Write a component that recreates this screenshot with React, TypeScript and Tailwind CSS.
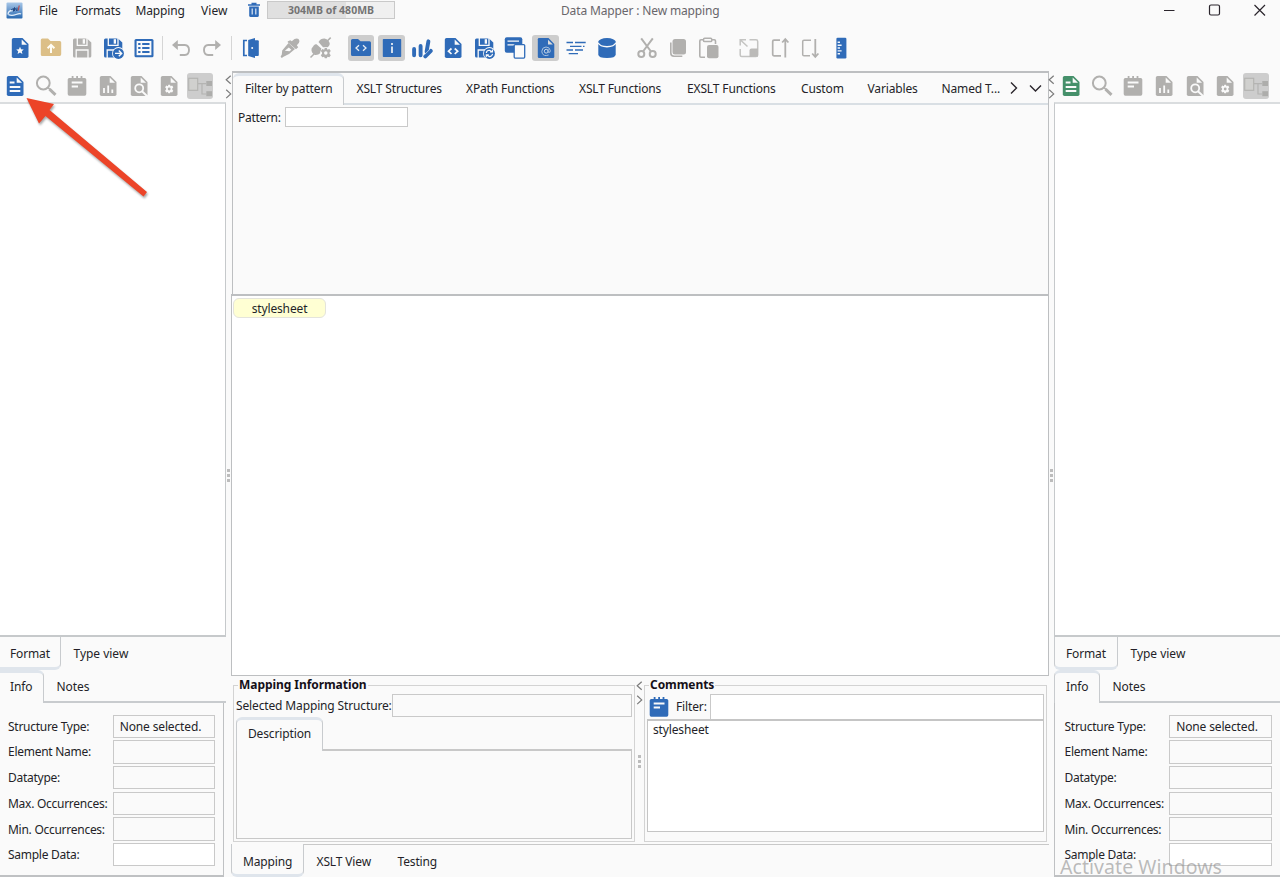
import React from 'react';

const BLUE = '#2f6bb8';
const GRAY = '#b1b0ae';
const GREEN = '#45906a';
const BG = '#fafafa';

type IconProps = { c?: string };

function Svg({ children }: { children: React.ReactNode }) {
  return (
    <svg width="24" height="24" viewBox="0 0 24 24" fill="none" className="block shrink-0">
      {children}
    </svg>
  );
}

function FileBase({ c, children }: { c: string; children?: React.ReactNode }) {
  return (
    <Svg>
      <path d="M14.5 2H5.5Q3.8 2 3.8 3.7V20.3Q3.8 22 5.5 22H18.8Q20.5 22 20.5 20.3V8Z" fill={c} />
      <path d="M13.7 3.6V8.8H19Z" fill={BG} />
      {children}
    </Svg>
  );
}

const NewFile = () => (
  <FileBase c={BLUE}>
    <path d="M12 10.7l1.1 2.5 2.7.3-2 1.8.6 2.7-2.4-1.4L9.6 18l.6-2.7-2-1.8 2.7-.3z" fill={BG} />
  </FileBase>
);
const FolderUp = () => (
  <Svg>
    <path d="M1.8 4Q1.8 2.5 3.3 2.5H9L11.5 5H20.7Q22.2 5 22.2 6.5V18.3Q22.2 20 20.6 20H3.3Q1.8 20 1.8 18.4Z" fill="#dcbf87" />
    <path d="M12 17V10M8.6 12.2L12 8.8L15.4 12.2" stroke="#fffdf5" strokeWidth="2" />
  </Svg>
);
function SaveBody({ c }: { c: string }) {
  return (
    <>
      <path d="M4.5 2.5H17L21.3 6.5V20Q21.3 21.5 19.8 21.5H4.5Q3 21.5 3 20V4Q3 2.5 4.5 2.5Z" fill={c} />
      <path d="M7.3 2V9.3H17V2M6.2 22V14H18V22" stroke={BG} strokeWidth="1.3" />
      <path d="M12.7 3.2H15V7.7H12.7Z" fill={BG} />
    </>
  );
}
const Save = () => <Svg><SaveBody c={GRAY} /></Svg>;
const SaveAs = () => (
  <Svg>
    <SaveBody c={BLUE} />
    <circle cx="17.4" cy="17.4" r="6.3" fill={BG} />
    <circle cx="17.4" cy="17.4" r="5.5" fill={BLUE} />
    <path d="M14 17.4H20.5M17.8 14.5L20.7 17.4L17.8 20.3" stroke={BG} strokeWidth="1.4" />
  </Svg>
);
const SaveSync = () => (
  <Svg>
    <SaveBody c={BLUE} />
    <circle cx="17.4" cy="17.4" r="6.3" fill={BG} />
    <circle cx="17.4" cy="17.4" r="5.5" fill={BLUE} />
    <path d="M14.3 17Q14.6 14.2 17.5 14.2L19.8 15.5M20.5 13.5V16H18M20.6 17.8Q20 20.5 17.4 20.6L15 19.3M14.3 21.2V18.8H16.8" stroke={BG} strokeWidth="1.1" />
  </Svg>
);
const ListIcon = () => (
  <Svg>
    <rect x="2.5" y="3" width="19" height="18.3" rx="1.5" fill={BLUE} />
    <rect x="4.6" y="5" width="14.8" height="14.2" fill={BG} />
    <path d="M6.2 8H8.5M10.2 8H17.5M6.2 12H8.5M10.2 12H17.5M6.2 16H8.5M10.2 16H17.5" stroke={BLUE} strokeWidth="2" />
  </Svg>
);
const Undo = () => (
  <Svg>
    <path d="M5 9H15.8Q20 9.3 20 14T15.8 19H10.8" stroke={GRAY} strokeWidth="1.9" />
    <path d="M8.8 4V14L3 9Z" fill={GRAY} />
  </Svg>
);
const Redo = () => (
  <Svg>
    <path d="M19 9H8.2Q4 9.3 4 14T8.2 19H13.2" stroke={GRAY} strokeWidth="1.9" />
    <path d="M15.2 4V14L21 9Z" fill={GRAY} />
  </Svg>
);
const Door = () => (
  <Svg>
    <path d="M8 4.5H4.8V19.5H8" stroke={BLUE} strokeWidth="1.7" />
    <path d="M9.2 4L16 2V22L9.2 20Z" fill={BLUE} />
    <path d="M16 4.2H18.8Q19.8 4.2 19.8 5.2V19Q19.8 20 18.8 20H16Z" fill={BLUE} />
    <circle cx="13.2" cy="12" r="1" fill={BG} />
  </Svg>
);
const Dropper = () => (
  <Svg>
    <path d="M10 5.2L12.3 4.3L13.8 5.3L16.5 3Q20.7 1.4 21.5 5Q21.5 7.2 18.8 9.3L20.2 11.3L18 13.3L9.5 6Z" fill={GRAY} />
    <path d="M10.5 7L17 13L11 18L5.5 20.7L3.8 22L2.6 20.8L3.8 18.5L4.2 14.5Z" fill={GRAY} />
    <path d="M6.8 14.8L10.8 11.5L13.3 13.8L11.5 15.3Z" fill={BG} />
  </Svg>
);
const Gear = ({ x, y, s, c, h }: { x: number; y: number; s: number; c: string; h: string }) => (
  <g transform={`translate(${x} ${y}) scale(${s})`}>
    <path d="M-1 -5H1L1.6 -3.3L3.4 -4L4.8 -2L3.6 -.5V.7L4.8 2L3.4 4L1.6 3.4L1 5H-1L-1.6 3.4L-3.4 4L-4.8 2L-3.6 .7V-.5L-4.8 -2L-3.4 -4L-1.6 -3.3Z" fill={c} />
    <circle r="1.7" fill={h} />
  </g>
);
const PlugGear = () => (
  <Svg>
    <path d="M4.8 9.5Q6 8 7.5 8.3L12.3 12.5L11.5 17Q9 19.5 5.8 19Q1.8 16.5 2.6 12.5Z" fill={GRAY} />
    <path d="M9.5 6Q11.5 2.5 15.5 2.6Q20.3 4 20.8 8Q20.3 10.5 18.5 11.2H14Z" fill={GRAY} />
    <path d="M1.5 21.5L5 18M18.5 4.8L21.7 1.6" stroke={GRAY} strokeWidth="1.5" />
    <circle cx="16.6" cy="17" r="5.4" fill={BG} />
    <Gear x={16.8} y={17.1} s={1.04} c={GRAY} h={BG} />
  </Svg>
);
const FolderCode = () => (
  <Svg>
    <path d="M2 4.5Q2 3 3.5 3H9L11.5 5.3H20.5Q22 5.3 22 6.8V18.5Q22 20 20.5 20H3.5Q2 20 2 18.5Z" fill={BLUE} />
    <path d="M10 9.2L7 12L10 14.8M14 9.2L17 12L14 14.8" stroke="#e7edf4" strokeWidth="1.3" />
  </Svg>
);
const InfoIcon = () => (
  <Svg>
    <rect x="2.8" y="3" width="18.4" height="18" rx=".7" fill={BLUE} />
    <path d="M12 7V9M12 10.5V17" stroke="#e4eaf2" strokeWidth="1.8" />
  </Svg>
);
const Strokes = () => (
  <Svg>
    <path d="M4.1 13V19.3M10.6 10V19.3M16.6 15.5L18.4 5.3" stroke={BLUE} strokeWidth="3.9" strokeLinecap="round" />
    <path d="M15.3 20.3L20.8 14.8" stroke={BLUE} strokeWidth="4" strokeLinecap="round" />
    <path d="M14.3 18.8L20 13.2" stroke={BG} strokeWidth=".6" />
  </Svg>
);
const FileCode = () => (
  <FileBase c={BLUE}>
    <path d="M10.5 12.5L7.5 15.2L10.5 18M13.7 12.5L16.7 15.2L13.7 18" stroke={BG} strokeWidth="1.7" />
  </FileBase>
);
const Copies = () => (
  <Svg>
    <rect x="1.8" y="1.3" width="17.5" height="15.5" rx="2" fill={BLUE} />
    <path d="M4.5 5.2H16M4.5 8.8H13" stroke={BG} strokeWidth="1.2" />
    <rect x="11.2" y="8.6" width="10.5" height="13.5" rx="1" fill={BG} stroke={BLUE} strokeWidth="1.3" />
  </Svg>
);
const FileAt = () => (
  <Svg>
    <path d="M14.5 2H5Q3.8 2 3.8 3.3V20.7Q3.8 22 5 22H19Q20.3 22 20.3 20.7V8Z" fill={BLUE} />
    <path d="M14 3.8V8.6H18.8Z" fill="#dcdcdc" />
    <circle cx="12.2" cy="15.2" r="1.9" stroke="#c9d8ea" strokeWidth="1" />
    <path d="M14.1 13V16.2Q16.5 17.2 16.3 14.5Q15.7 11 12 11Q8 11.2 7.8 15.3Q8.2 19.7 12.2 19.6L14.6 19" stroke="#a9c2df" strokeWidth="1" />
  </Svg>
);
const Lines = () => (
  <Svg>
    <path d="M2.5 6.5H9M11 6.5H21.7M6 10.3H17.5M19 10.3H20.5M2.5 14H9M11 14H19M4.7 17.6H14" stroke={BLUE} strokeWidth="1.3" />
  </Svg>
);
const Database = () => (
  <Svg>
    <path d="M3.3 5.8V18.5Q3.5 22 12 22T20.7 18.5V5.8Z" fill={BLUE} />
    <ellipse cx="12" cy="5.8" rx="8.7" ry="3.7" fill={BLUE} />
    <path d="M3 6.8Q5 10.7 12 10.7T21 6.8" stroke={BG} strokeWidth="1.4" />
  </Svg>
);
const Cut = () => (
  <Svg>
    <path d="M6.2 2.4L16 15.5M17.8 2.4L8 15.5" stroke={GRAY} strokeWidth="2" />
    <circle cx="6.3" cy="18" r="3" stroke={GRAY} strokeWidth="2" />
    <circle cx="17.7" cy="18" r="3" stroke={GRAY} strokeWidth="2" />
  </Svg>
);
const Copy = () => (
  <Svg>
    <rect x="6.5" y="3" width="13.5" height="15.5" rx="2.5" fill={GRAY} />
    <path d="M4.8 6.5V17Q4.8 20 8 20.3H16.3" stroke={GRAY} strokeWidth="1.6" />
  </Svg>
);
const Paste = () => (
  <Svg>
    <path d="M8 21.2H4Q2.8 21.2 2.8 20V5Q2.8 3.8 4 3.8H17.3Q18.5 3.8 18.5 5V8" stroke={GRAY} strokeWidth="1.6" />
    <rect x="6.5" y="2.2" width="8.3" height="3.4" rx="1.2" fill={BG} stroke={GRAY} strokeWidth="1.5" />
    <rect x="10" y="9" width="11.5" height="13.2" rx="2" fill={GRAY} />
  </Svg>
);
const Resize = () => (
  <Svg>
    <path d="M12.5 3.7H19Q20.7 3.7 20.7 5.4V19Q20.7 20.5 19 20.5H4.7Q3.2 20.5 3.2 19V13" stroke="#c4c4c2" strokeWidth="1.5" />
    <path d="M3.2 9.5V3.7H9M3.2 3.7L10.5 10.5" stroke="#c4c4c2" strokeWidth="1.5" />
    <path d="M12.5 21V14.5Q12.5 12.5 14.5 12.5H21V20.5Z" fill="#bbbab8" />
  </Svg>
);
const BoxUp = () => (
  <Svg>
    <path d="M12 4.2H6Q4.7 4.2 4.7 5.5V18.5Q4.7 19.8 6 19.8H13" stroke={GRAY} strokeWidth="1.7" />
    <path d="M17.3 21.5V4M14.2 6.5L17.3 3L20.4 6.5" stroke={GRAY} strokeWidth="1.8" />
  </Svg>
);
const BoxDown = () => (
  <Svg>
    <path d="M13 4.2H6Q4.7 4.2 4.7 5.5V18.5Q4.7 19.8 6 19.8H12" stroke={GRAY} strokeWidth="1.5" />
    <path d="M17.3 3V20M14.2 17.5L17.3 21L20.4 17.5" stroke={GRAY} strokeWidth="1.8" />
  </Svg>
);
const Ruler = () => (
  <Svg>
    <rect x="7.4" y="1.8" width="10" height="20.6" rx="1.2" fill={BLUE} />
    <path d="M8.6 6.3H11M8.6 9.2H12.6M8.6 12H11M8.6 14.9H12.6M8.6 17.8H11" stroke="#f2f6fa" strokeWidth="1.4" />
  </Svg>
);

const DocLines = ({ c = GRAY }: IconProps) => (
  <FileBase c={c}>
    <path d="M6.7 8.5H11.5M6.7 13H17.3M6.7 17H17.3" stroke={BG} strokeWidth="1.8" />
  </FileBase>
);
const Search = () => (
  <Svg>
    <circle cx="9.3" cy="9" r="6.4" stroke={GRAY} strokeWidth="2" />
    <path d="M14 13.6L16 15.5" stroke={GRAY} strokeWidth="1.6" />
    <path d="M15.5 15.2L21.5 20.8" stroke={GRAY} strokeWidth="3" />
  </Svg>
);
const Notepad = ({ c = GRAY }: IconProps) => (
  <Svg>
    <path d="M4.3 4H6.7V2H8.5V4H11.2V2H13V4H15.6V2H17.4V4H19.7Q21.3 4 21.3 5.6V20Q21.3 21.7 19.7 21.7H4.3Q2.7 21.7 2.7 20V5.6Q2.7 4 4.3 4Z" fill={c} />
    <path d="M6.7 8.5H17.5M6.7 12.5H13" stroke={BG} strokeWidth="1.8" />
  </Svg>
);
const FileBars = () => (
  <FileBase c={GRAY}>
    <path d="M8 14V19M12.2 11.5V19M16.3 15.5V19" stroke={BG} strokeWidth="1.8" />
  </FileBase>
);
const FileSearch = () => (
  <FileBase c={GRAY}>
    <circle cx="12.2" cy="14.3" r="4" fill={GRAY} stroke={BG} strokeWidth="1.8" />
    <path d="M15 17.2L20 22" stroke={BG} strokeWidth="1.9" />
  </FileBase>
);
const FileGear = () => (
  <FileBase c={GRAY}>
    <Gear x={12.2} y={15} s={0.85} c={BG} h={GRAY} />
  </FileBase>
);
const Tree = () => (
  <Svg>
    <rect x=".7" y="4.3" width="9" height="12" fill="#d0d0ce" stroke="#b4b4b2" strokeWidth="1.2" />
    <path d="M10 9.7H18M14 9.7V20H18" stroke="#b4b4b2" strokeWidth="1.2" />
    <rect x="18.3" y="7" width="6" height="5" fill="#adadab" />
    <rect x="18.3" y="17.2" width="6" height="5" fill="#adadab" />
  </Svg>
);

function Slot({ on, children }: { on?: boolean; children: React.ReactNode }) {
  return (
    <div className="flex h-[26px] w-[30.8px] shrink-0 items-center justify-center">
      <div className={on ? 'flex size-[26.5px] items-center justify-center rounded-[3px] bg-[#cdcdcd]' : 'flex'}>{children}</div>
    </div>
  );
}

function Splitter({ className }: { className: string }) {
  return (
    <div className={className}>
      <svg width="7" height="24" viewBox="0 0 7 24" fill="none" className="shrink-0">
        <path d="M5.7 .8L1.2 4.8L5.7 8.8M1.2 14.7L5.7 18.9L1.2 23.1" stroke="#7b7b7b" strokeWidth="1.2" />
      </svg>
      <div className="flex flex-col gap-[2px]">
        <i className="size-[3px] bg-[#bcbcbc]" />
        <i className="size-[3px] bg-[#bcbcbc]" />
        <i className="size-[3px] bg-[#bcbcbc]" />
      </div>
    </div>
  );
}

function SideToolbar({ color, right }: { color: string; right?: boolean }) {
  return (
    <div className={right ? 'flex h-[31px] shrink-0 pt-[2px] pl-[2px]' : 'flex h-[31px] shrink-0 pt-[2px]'}>
      <Slot><DocLines c={color} /></Slot>
      <Slot><Search /></Slot>
      <Slot><Notepad /></Slot>
      <Slot><FileBars /></Slot>
      <Slot><FileSearch /></Slot>
      <Slot><FileGear /></Slot>
      <Slot on><Tree /></Slot>
    </div>
  );
}

const FIELDS: [string, string][] = [
  ['Structure Type:', 'None selected.'],
  ['Element Name:', ''],
  ['Datatype:', ''],
  ['Max. Occurrences:', ''],
  ['Min. Occurrences:', ''],
  ['Sample Data:', ''],
];

function SidePanel({ right }: { right?: boolean }) {
  return (
    <div className={right ? 'flex w-[226px] shrink-0 flex-col' : 'flex w-[226px] shrink-0 flex-col'}>
      <SideToolbar color={right ? GREEN : BLUE} right={right} />
      <div className={right ? 'h-[535px] shrink-0 border-t-2 border-b-2 border-l border-[#c6c9cb] border-t-[#dadddf] bg-white' : 'h-[535px] shrink-0 border-t-2 border-r border-b-2 border-[#c6c9cb] border-t-[#dadddf] bg-white'} />
      <div className="flex h-[33px] shrink-0">
        <div className={right ? 'w-[64px] rounded-b-md border-x border-b-[3px] border-[#c8cbce] border-b-[#dfe5ec] pt-[8px] pl-[11px] leading-[17px]' : 'w-[61px] rounded-br-md border-r border-b-[3px] border-[#c8cbce] border-b-[#dfe5ec] pt-[8px] pl-[10px] leading-[17px]'}>Format</div>
        <div className="pt-[8px] pl-[12.5px] leading-[17px] tracking-[-0.02px]">Type view</div>
      </div>
      <div className="flex h-[33px] shrink-0">
        <div className={right ? 'w-[46px] rounded-t-md border-x border-t-[3px] border-[#c8cbce] border-t-[#dfe5ec] pt-[5px] pl-[11px] leading-[17px]' : 'w-[44px] rounded-tr-md border-t-[3px] border-r border-[#c8cbce] border-t-[#dfe5ec] pt-[5px] pl-[10px] leading-[17px]'}>Info</div>
        <div className="flex-1 border-b-2 border-[#c8cbce] pt-[8px] pl-[12.5px] leading-[17px] tracking-[-0.05px]">Notes</div>
      </div>
      <div className={right ? 'flex flex-1 flex-col gap-[2.2px] border-b-2 border-l border-[#bfc1c3] pt-[11.5px] pl-[9.5px]' : 'mr-[2px] flex flex-1 flex-col gap-[2.2px] border-r border-b-2 border-[#bfc1c3] pt-[11.5px] pl-[8px]'}>
        {FIELDS.map(([label, value], i) => (
          <div key={label} className="flex h-[23.5px] shrink-0 items-center">
            <span className="w-[104.7px] shrink-0 pt-[1px] tracking-[-0.27px]">{label}</span>
            <span className={i === 5 ? 'h-full w-[102.5px] border border-[#c9c9c9] bg-white' : 'flex h-full w-[102.5px] items-center border border-[#c9c9c9] pt-[1px] pl-[6px]'}>{value}</span>
          </div>
        ))}
      </div>
    </div>
  );
}

function GroupBox({ title, className, children }: { title: string; className: string; children: React.ReactNode }) {
  return (
    <fieldset className={className}>
      <legend className="ml-[2px] h-[15px] px-[1px] leading-[13px] font-bold tracking-[-0.06px] text-[#151018]">{title}</legend>
      {children}
    </fieldset>
  );
}

const TABS: [string, string][] = [
  ['XSLT Structures', 'w-[109.5px]'],
  ['XPath Functions', 'w-[113px]'],
  ['XSLT Functions', 'w-[108px]'],
  ['EXSLT Functions', 'w-[114px]'],
  ['Custom', 'w-[66.5px]'],
  ['Variables', 'w-[74px]'],
  ['Named T...', 'w-[66px]'],
];

export default function App() {
  return (
    <div className="relative flex h-[877px] w-[1280px] flex-col overflow-hidden bg-[#fafafa] font-['Noto_Sans','Open_Sans',sans-serif] text-[12px] tracking-[-0.14px] whitespace-nowrap text-[#241f28]">
      <header className="flex h-[22px] shrink-0 items-center">
        <svg width="17" height="17" viewBox="0 0 17 17" className="mr-[16px] mb-[2px] ml-[6px]">
          <defs>
            <linearGradient id="logo" x2="0" y2="1">
              <stop stopColor="#a9c8e9" />
              <stop offset="1" stopColor="#2768b0" />
            </linearGradient>
          </defs>
          <rect x=".5" y=".5" width="16" height="16" rx="1" fill="url(#logo)" />
          <path d="M2 12.5Q2 8.5 6.5 8.5M2.5 12.7Q6 14 10 12.5T15 12" stroke="#e6f0fa" strokeWidth="1.3" fill="none" />
          <path d="M5 8L7.5 6.5V9.5M8.5 9V5.5L11 9V5.5" stroke="#244b85" fill="none" />
          <path d="M13.2 3.5L12.3 8.5" stroke="#b84d50" strokeWidth="1.2" />
        </svg>
        <span className="w-[36px]">File</span>
        <span className="w-[60.5px]">Formats</span>
        <span className="w-[65.5px]">Mapping</span>
        <span className="w-[46px] tracking-[0.05px]">View</span>
        <svg width="14" height="16" viewBox="0 0 14 16" fill="none" className="mr-[6px] mb-[3px]">
          <path d="M1 3H13M4.5 1.5H9.5" stroke={BLUE} strokeWidth="1.7" />
          <path d="M2.2 4.5H11.8V13.5Q11.8 15 10.3 15H3.7Q2.2 15 2.2 13.5Z" fill={BLUE} />
          <path d="M5.2 6.5V12.5M8.8 6.5V12.5" stroke="#dce8f5" strokeWidth="1.2" />
        </svg>
        <div className="mb-[2px] flex h-[18.5px] w-[128px] items-center justify-center border border-[#c9c9c9] bg-linear-to-r from-[#e0e0e0] from-62% to-[#f0f0f0] to-62% pt-px text-[10.5px] font-bold tracking-[0.02px] text-[#747474]">304MB of 480MB</div>
        <div className="ml-[166px] w-[603px] text-[#69666b]">Data Mapper : New mapping</div>
        <svg width="102" height="14" viewBox="0 0 102 14" fill="none" stroke="#2a252c" strokeWidth="1.2" className="mb-[2px]">
          <path d="M0 7.5H10.5M90.5 2L101 12.5M101 2L90.5 12.5" />
          <rect x="45.5" y="2" width="10" height="10" rx="1.5" />
        </svg>
      </header>
      <div className="flex h-[49px] shrink-0 items-center pt-[3px] pl-[5px]">
        <Slot><NewFile /></Slot><Slot><FolderUp /></Slot><Slot><Save /></Slot><Slot><SaveAs /></Slot><Slot><ListIcon /></Slot>
        <i className="mr-[3px] ml-[3px] h-6 w-px bg-[#d5d5d5]" />
        <Slot><Undo /></Slot><Slot><Redo /></Slot>
        <i className="mr-[4px] ml-[3.5px] h-6 w-px bg-[#d5d5d5]" />
        <Slot><Door /></Slot>
        <div className="ml-[8px] flex"><Slot><Dropper /></Slot><Slot><PlugGear /></Slot></div>
        <div className="ml-[9px] flex">
          <Slot on><FolderCode /></Slot><Slot on><InfoIcon /></Slot><Slot><Strokes /></Slot><Slot><FileCode /></Slot><Slot><SaveSync /></Slot>
          <Slot><Copies /></Slot><Slot on><FileAt /></Slot><Slot><Lines /></Slot><Slot><Database /></Slot>
        </div>
        <div className="ml-[9.3px] flex"><Slot><Cut /></Slot><Slot><Copy /></Slot><Slot><Paste /></Slot></div>
        <div className="ml-[9px] flex"><Slot><Resize /></Slot><Slot><BoxUp /></Slot><Slot><BoxDown /></Slot><Slot><Ruler /></Slot></div>
      </div>
      <main className="flex min-h-0 flex-1">
        <SidePanel />
        <Splitter className="flex w-[5px] shrink-0 flex-col items-center gap-[370px] pt-[4px]" />
        <div className="flex w-[818px] shrink-0 flex-col">
          <section className="ml-[1px] flex h-[223px] shrink-0 flex-col border-x border-t-2 border-[#bdbfc1]">
            <div className="flex h-[32px] shrink-0">
              <div className="w-[111px] rounded-t-md border-t-[3px] border-r border-[#c8cbce] border-t-[#dfe5ec] pt-[4px] pl-[12px] leading-[17px]">Filter by pattern</div>
              <div className="flex flex-1 border-b-2 border-[#d9dfe4] pt-[7px] pl-[12.5px] leading-[17px]">
                {TABS.map(([t, w]) => <span key={t} className={`shrink-0 ${w}`}>{t}</span>)}
                <svg width="38" height="16" viewBox="0 0 38 16" fill="none" stroke="#2a252c" strokeWidth="1.4" className="shrink-0">
                  <path d="M3 2.5L8.5 8L3 13.5M22 5.5L27.5 11L33 5.5" />
                </svg>
              </div>
            </div>
            <div className="flex items-center pt-[2px] pl-[5px]">
              <span className="w-[47px] pt-px tracking-[-0.3px]">Pattern:</span>
              <span className="h-[20px] w-[123px] border border-[#c9c9c9] bg-white" />
            </div>
          </section>
          <section className="h-[382px] shrink-0 border border-t-2 border-[#bdbfc1] bg-white pt-[2px] pl-[1px]">
            <div className="flex h-[20px] w-[93px] items-center justify-center rounded-md border border-[#e4e4dc] bg-[#ffffd3] pt-px">stylesheet</div>
          </section>
          <section className="flex h-[168px] shrink-0 pt-[2px] pl-[2px]">
            <GroupBox title="Mapping Information" className="flex h-[164px] w-[402px] shrink-0 flex-col border border-[#d3d3d3] px-[2px]">
              <div className="flex h-[24px] shrink-0 items-center pt-[1px]">
                <span className="w-[156px] shrink-0 pt-px">Selected Mapping Structure:</span>
                <span className="h-[23px] flex-1 border border-[#c9c9c9]" />
              </div>
              <div className="flex h-[34px]">
                <div className="w-[87px] rounded-t-md border-x border-t-[3px] border-[#c8cbce] border-t-[#dfe5ec] pt-[5px] pl-[11px] leading-[17px]">Description</div>
                <div className="flex-1 border-b-2 border-[#c8c8c8]" />
              </div>
              <div className="h-[88px] border border-t-0 border-[#c8c8c8]" />
            </GroupBox>
            <Splitter className="flex w-[9px] shrink-0 flex-col items-center gap-[50px] pt-[3px]" />
            <GroupBox title="Comments" className="flex h-[164px] w-[403px] shrink-0 flex-col border border-[#d3d3d3] px-[2px]">
              <div className="flex h-[26px] shrink-0 items-center pt-px">
                <div className="w-[29px]"><Notepad c={BLUE} /></div>
                <span className="w-[34px] shrink-0 pt-[1px]">Filter:</span>
                <span className="h-[25px] flex-1 border border-b-0 border-[#c9c9c9] bg-white" />
              </div>
              <div className="h-[113px] border border-t-2 border-[#c5c5c5] bg-white pl-[5px] leading-[18px]">stylesheet</div>
            </GroupBox>
          </section>
          <div className="flex h-[33px] shrink-0">
            <div className="w-[73px] rounded-b-md border-x border-b-[3px] border-[#c8cbce] border-b-[#dfe5ec] pt-[9px] pl-[11px] leading-[17px]">Mapping</div>
            <div className="flex flex-1 border-t border-[#c8c8c8] pt-[8px] pl-[12.5px] leading-[17px]">
              <span className="w-[81px]">XSLT View</span><span>Testing</span>
            </div>
          </div>
        </div>
        <Splitter className="flex w-[5px] shrink-0 flex-col items-center gap-[370px] pt-[4px]" />
        <SidePanel right />
      </main>
      <svg className="absolute top-[90px] left-[20px] drop-shadow-[1px_2px_1px_rgba(0,0,0,0.35)]" width="135" height="115" viewBox="0 0 135 115">
        <path d="M6.5 8L34 14L29.5 20L127 102L123.5 106.5L25.5 26L19 33.5Z" fill="#ec4428" />
      </svg>
      <div className="absolute top-[856px] left-[1060px] text-[19.5px] leading-[21px] tracking-[0.05px] text-[#8f8f8f]/60">Activate Windows</div>
    </div>
  );
}
